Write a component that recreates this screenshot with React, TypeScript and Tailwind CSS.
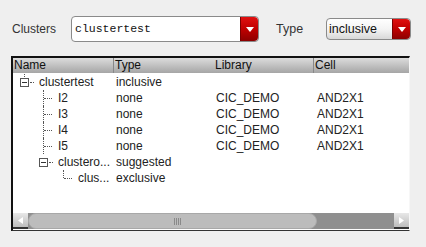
import React from "react";

interface Row {
  name: string;
  type: string;
  library: string;
  cell: string;
  depth: number;
  kind: "root" | "leaf" | "last";
}

const ROWS: Row[] = [
  { name: "clustertest", type: "inclusive", library: "", cell: "", depth: 0, kind: "root" },
  { name: "I2", type: "none", library: "CIC_DEMO", cell: "AND2X1", depth: 1, kind: "leaf" },
  { name: "I3", type: "none", library: "CIC_DEMO", cell: "AND2X1", depth: 1, kind: "leaf" },
  { name: "I4", type: "none", library: "CIC_DEMO", cell: "AND2X1", depth: 1, kind: "leaf" },
  { name: "I5", type: "none", library: "CIC_DEMO", cell: "AND2X1", depth: 1, kind: "leaf" },
  { name: "clustero...", type: "suggested", library: "", cell: "", depth: 1, kind: "root" },
  { name: "clus...", type: "exclusive", library: "", cell: "", depth: 2, kind: "last" },
];

const FONT = { fontFamily: '"Liberation Sans", Arial, sans-serif' };

function RedButton() {
  return (
    <div className="flex w-[18px] items-center justify-center rounded-r-[4px] border-l border-[#7a0000] bg-gradient-to-b from-[#e01010] via-[#c00000] to-[#8c0000]">
      <svg width="8" height="5" viewBox="0 0 8 5">
        <path d="M0 0 H8 L4 5 Z" fill="#ffffff" />
      </svg>
    </div>
  );
}

function Expander() {
  return (
    <div className="flex h-[9px] w-[9px] items-center justify-center border border-[#555] bg-white">
      <div className="h-px w-[5px] bg-[#333]" />
    </div>
  );
}

function TreeCell({ row }: { row: Row }) {
  const indent = row.depth === 0 ? "pl-[7px]" : row.depth === 1 ? "pl-[26px]" : "pl-[46px]";
  if (row.kind === "root") {
    return (
      <div className={`relative flex h-full items-center ${indent}`}>
        <Expander />
        <div className="ml-px w-[4px] border-t border-dotted border-[#555]" />
        <span className="ml-[5px]">{row.name}</span>
        {row.depth === 0 && (
          <div className="absolute left-[11px] top-0 h-[3px] border-l border-dotted border-[#555]" />
        )}
      </div>
    );
  }
  return (
    <div className={`relative flex h-full items-center ${indent}`}>
      <div
        className={`absolute ${row.depth === 1 ? "left-[30px]" : "left-[50px]"} top-0 border-l border-dotted border-[#555] ${row.kind === "last" ? "h-[8px]" : "h-full"}`}
      />
      <div className="ml-[5px] w-[8px] border-t border-dotted border-[#555]" />
      <span className="ml-[6px]">{row.name}</span>
    </div>
  );
}

export default function App() {
  return (
    <div className="h-[247px] w-[426px] overflow-hidden bg-[#efefef]" style={FONT}>
      <div className="flex items-center pl-[12px] pt-[16px]">
        <span className="w-[59px] text-[12px] text-[#333]">Clusters</span>
        <div className="flex h-[26px] w-[188px] items-stretch rounded-[4px] border border-[#8a8a8a] bg-white">
          <div
            className="flex flex-1 items-center pl-[3px] text-[11.5px] text-[#111]"
            style={{ fontFamily: '"Liberation Mono", "Courier New", monospace' }}
          >
            clustertest
          </div>
          <RedButton />
        </div>
        <span className="ml-[17px] w-[50px] text-[12.5px] text-[#333]">Type</span>
        <div className="flex h-[22px] w-[85px] items-stretch rounded-[4px] border border-[#8a8a8a] bg-gradient-to-b from-white via-[#f4f4f4] to-[#d8d8d8]">
          <div className="flex flex-1 items-center pl-[2px] text-[12.5px] text-[#111]">inclusive</div>
          <RedButton />
        </div>
      </div>

      <div className="ml-[11px] mt-[14px] flex h-[175px] w-[399px] flex-col border-l-2 border-t-2 border-b border-r border-l-[#111] border-t-[#111] border-b-[#333] border-r-[#f7f7f7] bg-white">
        <div className="grid h-[15px] grid-cols-[100px_100px_100px_1fr] bg-gradient-to-b from-[#dcdcdc] to-[#a6a6a6] text-[12px] leading-[15px] text-[#111]">
          <div className="pl-[1px]">Name</div>
          <div className="border-l border-[#888] pl-[1px]">Type</div>
          <div className="pl-[2px]">Library</div>
          <div className="border-l border-[#888] pl-[1px]">Cell</div>
        </div>

        <div className="flex-1 text-[12px] text-[#222]">
          {ROWS.map((row, i) => (
            <div
              key={i}
              className={`grid h-[16px] grid-cols-[100px_100px_100px_1fr] leading-[16px] ${i === 0 ? "mt-[1px]" : ""}`}
            >
              <TreeCell row={row} />
              <div className="pl-[3px]">{row.type}</div>
              <div className="pl-[3px]">{row.library}</div>
              <div className="pl-[4px]">{row.cell}</div>
            </div>
          ))}
        </div>

        <div className="mb-px flex h-[16px] items-stretch">
          <div className="flex w-[15px] items-center justify-center border-b-2 border-[#333] bg-gradient-to-b from-[#e8e8e8] to-[#bdbdbd]">
            <svg width="5" height="7" viewBox="0 0 5 7">
              <path d="M5 0 V7 L0 3.5 Z" fill="#ffffff" />
            </svg>
          </div>
          <div className="flex flex-1 items-stretch bg-[#8f8f8f]">
            <div className="flex w-[289px] items-center rounded-[8px] border border-[#a8a8a8] bg-[#bcbcbc] pl-[145px]">
              <div className="flex h-[7px] gap-px">
                <div className="w-px bg-[#8a8a8a]" />
                <div className="w-px bg-[#8a8a8a]" />
                <div className="w-px bg-[#8a8a8a]" />
                <div className="w-px bg-[#8a8a8a]" />
              </div>
            </div>
          </div>
          <div className="flex w-[15px] items-center justify-center border-b-2 border-[#333] bg-gradient-to-b from-[#e8e8e8] to-[#bdbdbd]">
            <svg width="5" height="7" viewBox="0 0 5 7">
              <path d="M0 0 V7 L5 3.5 Z" fill="#ffffff" />
            </svg>
          </div>
        </div>
      </div>
    </div>
  );
}
